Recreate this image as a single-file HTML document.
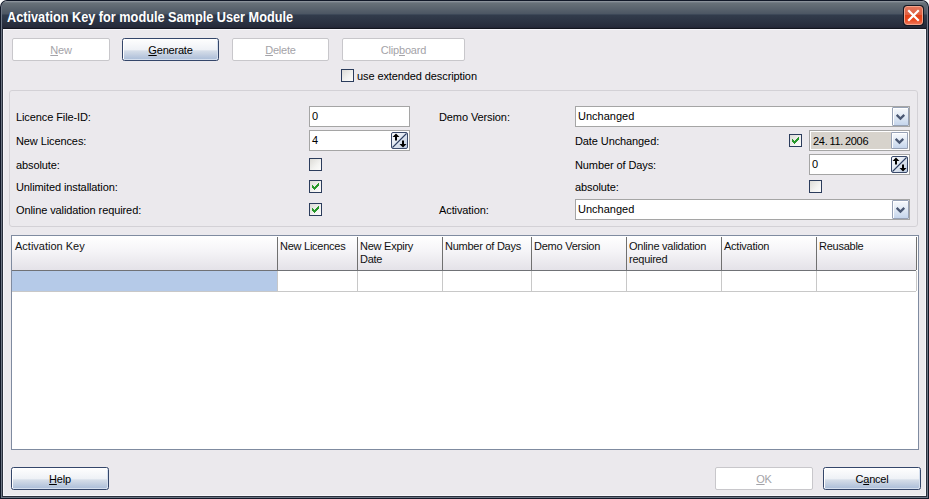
<!DOCTYPE html>
<html><head><meta charset="utf-8">
<style>
*{margin:0;padding:0;box-sizing:border-box}
html,body{width:929px;height:499px;overflow:hidden;background:#fff}
body{position:relative;font-family:"Liberation Sans",sans-serif;font-size:11px;color:#000;-webkit-font-smoothing:antialiased}
.a{position:absolute}
#win{left:0;top:0;width:929px;height:499px;background:#111828;border-radius:7px 7px 0 0;overflow:hidden}
#fb{left:1px;top:1px;width:927px;height:497px;background:#6d7584;border-radius:6px 6px 0 0}
#fc{left:2px;top:2px;width:925px;height:495px;background:#2a303c;border-radius:5px 5px 0 0}
#title{left:2px;top:1px;width:925px;height:27px;border-radius:5px 5px 0 0;
 background:linear-gradient(to bottom,#8b929a 0px,#8b929a 1px,#737c85 1px,#737c85 2px,#687179 2px,#4c5663 13px,#3d4858 13px,#3d4858 14px,#323c4c 14px,#262b3b 26px,#232636 26px,#232636 27px)}
#tline{left:3px;top:28px;width:923px;height:1px;background:#13161f}
#ttext{left:7px;top:11px;font-size:14px;letter-spacing:0;font-weight:bold;color:#fff;white-space:nowrap;line-height:13px;transform:scaleX(0.908);transform-origin:0 0}
#close{left:903px;top:5px;width:21px;height:21px;border-radius:4px;background:#151823;padding:1px}
#close i{display:block;width:19px;height:19px;border-radius:3px;border:1px solid #f3a48c;
 background:linear-gradient(to bottom,#e2755b 0%,#df6143 45%,#e3421a 50%,#e8481e 75%,#f07355 100%)}
#cw{left:3px;top:29px;width:923px;height:467px;background:#f7f6fb}
#content{left:4px;top:30px;width:921px;height:465px;background:#ebe9ed}
.btn{position:absolute;height:23px;border:1px solid #34466a;border-radius:2.5px;text-align:center;line-height:21px;padding-top:1px;letter-spacing:-0.2px;
 background:linear-gradient(to bottom,#fefefe 0%,#f8f9fb 20%,#eef1f6 52%,#d6dee9 56%,#c3cfe1 75%,#a9bcd8 100%);box-shadow:inset 1px 1px 0 #fff,inset -1px -1px 0 #d5dfee}
.btn.dis{border-color:#c8c7cb;border-radius:2px;background:#fff;color:#a4a3a8;box-shadow:none}
.u{text-decoration:underline;text-underline-offset:1px}
.lbl{position:absolute;white-space:nowrap;line-height:13px;margin-top:1px;letter-spacing:-0.1px}
.cb{position:absolute;width:13px;height:13px;border:1px solid #2b3c5c;background:linear-gradient(135deg,#dcdbd6 0%,#f3f3f1 60%,#fcfcfb 100%)}
.cb svg{position:absolute;left:-1px;top:-1px}
.fld{position:absolute;height:21px;border:1px solid #a5a5a5;background:#fff;padding-left:2px;line-height:19px}
.spin{position:absolute;width:17px;height:17px;border:1px solid #3a4a6b;border-radius:2px;background:linear-gradient(135deg,#fafbfd 0%,#dfe6f0 50%,#bccbe0 100%)}
.dd{position:absolute;width:17px;height:19px;border:1px solid #97a2b6;border-radius:1px;background:linear-gradient(to bottom,#f7f9fc 0%,#e3ebf5 45%,#c5d5ec 100%);box-shadow:inset 1px 1px 0 #fff}
#grp{left:9px;top:90px;width:909px;height:137px;border:1px solid #d3d1d6;border-radius:3px}
#tbl{left:11px;top:235px;width:908px;height:215px;border:1px solid #7f8ba0;background:#fff}
.hd{position:absolute;top:1px;height:34px;background:linear-gradient(to bottom,#ffffff 0%,#f4f3f6 50%,#e6e4ea 100%);border-bottom:1px solid #6f6f72}
.hs{position:absolute;top:2px;width:1px;height:33px;background:#707070}
.gl{position:absolute;top:35px;width:1px;height:21px;background:#c6c6c6}
.ht{position:absolute;top:6px;line-height:13px;white-space:nowrap;color:#111;letter-spacing:-0.25px}
</style></head><body>
<div id="win" class="a">
  <div id="fb" class="a"></div>
  <div id="fc" class="a"></div>
  <div id="title" class="a"></div>
  <div id="tline" class="a"></div>
  <div id="ttext" class="a">Activation Key for module Sample User Module</div>
  <div id="close" class="a"><i></i>
    <svg class="a" style="left:0;top:0" width="21" height="21" viewBox="0 0 21 21"><path d="M6 6L15 15M15 6L6 15" stroke="#fff" stroke-width="2.2" stroke-linecap="square"/></svg>
  </div>
  <div id="cw" class="a"></div>
  <div id="content" class="a"></div>

  <!-- top buttons -->
  <div class="btn dis" style="left:12px;top:38px;width:98px"><span class="u">N</span>ew</div>
  <div class="btn" style="left:122px;top:38px;width:97px"><span class="u">G</span>enerate</div>
  <div class="btn dis" style="left:232px;top:38px;width:97px"><span class="u">D</span>elete</div>
  <div class="btn dis" style="left:342px;top:38px;width:123px">Clip<span class="u">b</span>oard</div>
  <div class="cb" style="left:341px;top:69px"></div>
  <div class="lbl" style="left:357px;top:69px">use extended description</div>

  <div id="grp" class="a"></div>
  <div class="lbl" style="left:16px;top:110px">Licence File-ID:</div>
  <div class="lbl" style="left:16px;top:134px">New Licences:</div>
  <div class="lbl" style="left:16px;top:158px">absolute:</div>
  <div class="lbl" style="left:16px;top:180px">Unlimited installation:</div>
  <div class="lbl" style="left:16px;top:203px">Online validation required:</div>

  <div class="fld" style="left:309px;top:106px;width:101px">0</div>
  <div class="fld" style="left:309px;top:130px;width:101px">4</div>
  <div class="spin" style="left:391px;top:132px"><svg width="15" height="15" viewBox="0 0 15 15" style="position:absolute;left:0;top:0"><path d="M0.5 14.5L14.5 0.5" stroke="#2d3f63" stroke-width="1.1"/><path d="M4 0.5L7.5 4H5V7.5H3V4H0.5Z" fill="#000"/><path d="M10 7.5H12V11H14.5L11 14.5L7.5 11H10Z" fill="#000"/></svg></div>
  <div class="cb" style="left:309px;top:158px"></div>
  <div class="cb ck" style="left:309px;top:180px"><svg width="13" height="13" viewBox="0 0 13 13" shape-rendering="crispEdges"><path d="M9 3h1v1h-1zM8 4h2v1h-2zM3 5h1v1h-1zM7 5h3v1h-3zM3 6h2v1h-2zM6 6h3v1h-3zM3 7h5v1h-5zM4 8h3v1h-3zM5 9h1v1h-1z" fill="#27982a"/></svg></div>
  <div class="cb ck" style="left:309px;top:203px"><svg width="13" height="13" viewBox="0 0 13 13" shape-rendering="crispEdges"><path d="M9 3h1v1h-1zM8 4h2v1h-2zM3 5h1v1h-1zM7 5h3v1h-3zM3 6h2v1h-2zM6 6h3v1h-3zM3 7h5v1h-5zM4 8h3v1h-3zM5 9h1v1h-1z" fill="#27982a"/></svg></div>

  <div class="lbl" style="left:439px;top:110px">Demo Version:</div>
  <div class="fld" style="left:575px;top:106px;width:335px">Unchanged</div>
  <div class="dd" style="left:892px;top:107px"><svg width="15" height="17" viewBox="0 0 15 17" style="position:absolute;left:0;top:0"><path d="M3.65 6.85L7.45 10.65L11.25 6.85" stroke="#4a5873" stroke-width="2.2" fill="none"/></svg></div>
  <div class="lbl" style="left:575px;top:134px">Date Unchanged:</div>
  <div class="cb ck" style="left:789px;top:134px"><svg width="13" height="13" viewBox="0 0 13 13" shape-rendering="crispEdges"><path d="M9 3h1v1h-1zM8 4h2v1h-2zM3 5h1v1h-1zM7 5h3v1h-3zM3 6h2v1h-2zM6 6h3v1h-3zM3 7h5v1h-5zM4 8h3v1h-3zM5 9h1v1h-1z" fill="#27982a"/></svg></div>
  <div class="fld" style="left:809px;top:130px;width:101px;background:#d7d3cc;box-shadow:inset 0 0 0 1px #fff;padding-left:3px;padding-top:1px;letter-spacing:-0.3px"><span style="margin-right:2px">24.</span><span style="margin-right:2px">11.</span>2006</div>
  <div class="dd" style="left:891px;top:132px;height:17px"><svg width="15" height="15" viewBox="0 0 15 15" style="position:absolute;left:0;top:0"><path d="M3.65 5.85L7.45 9.65L11.25 5.85" stroke="#4a5873" stroke-width="2.2" fill="none"/></svg></div>
  <div class="lbl" style="left:575px;top:158px">Number of Days:</div>
  <div class="fld" style="left:809px;top:154px;width:101px">0</div>
  <div class="spin" style="left:891px;top:156px"><svg width="15" height="15" viewBox="0 0 15 15" style="position:absolute;left:0;top:0"><path d="M0.5 14.5L14.5 0.5" stroke="#2d3f63" stroke-width="1.1"/><path d="M4 0.5L7.5 4H5V7.5H3V4H0.5Z" fill="#000"/><path d="M10 7.5H12V11H14.5L11 14.5L7.5 11H10Z" fill="#000"/></svg></div>
  <div class="lbl" style="left:575px;top:180px">absolute:</div>
  <div class="cb" style="left:809px;top:180px"></div>
  <div class="lbl" style="left:439px;top:203px">Activation:</div>
  <div class="fld" style="left:575px;top:199px;width:335px">Unchanged</div>
  <div class="dd" style="left:892px;top:200px"><svg width="15" height="17" viewBox="0 0 15 17" style="position:absolute;left:0;top:0"><path d="M3.65 6.85L7.45 10.65L11.25 6.85" stroke="#4a5873" stroke-width="2.2" fill="none"/></svg></div>

  <div id="tbl" class="a"></div>
  <div class="a" style="left:12px;top:236px;width:904px;height:34px;background:linear-gradient(to bottom,#ffffff 0%,#f5f4f7 45%,#e4e2e8 100%)"></div>
  <div class="a" style="left:12px;top:270px;width:904px;height:1px;background:#707276"></div>
  <div class="a" style="left:12px;top:271px;width:265px;height:20px;background:#b5cae8"></div>
  <div class="a" style="left:12px;top:291px;width:904px;height:1px;background:#c8c8c8"></div>
  <div class="a" style="left:277px;top:237px;width:1px;height:33px;background:#707070"></div>
  <div class="a" style="left:277px;top:271px;width:1px;height:20px;background:#c8c8c8"></div>
  <div class="a" style="left:357px;top:237px;width:1px;height:33px;background:#707070"></div>
  <div class="a" style="left:357px;top:271px;width:1px;height:20px;background:#c8c8c8"></div>
  <div class="a" style="left:442px;top:237px;width:1px;height:33px;background:#707070"></div>
  <div class="a" style="left:442px;top:271px;width:1px;height:20px;background:#c8c8c8"></div>
  <div class="a" style="left:531px;top:237px;width:1px;height:33px;background:#707070"></div>
  <div class="a" style="left:531px;top:271px;width:1px;height:20px;background:#c8c8c8"></div>
  <div class="a" style="left:626px;top:237px;width:1px;height:33px;background:#707070"></div>
  <div class="a" style="left:626px;top:271px;width:1px;height:20px;background:#c8c8c8"></div>
  <div class="a" style="left:721px;top:237px;width:1px;height:33px;background:#707070"></div>
  <div class="a" style="left:721px;top:271px;width:1px;height:20px;background:#c8c8c8"></div>
  <div class="a" style="left:816px;top:237px;width:1px;height:33px;background:#707070"></div>
  <div class="a" style="left:816px;top:271px;width:1px;height:20px;background:#c8c8c8"></div>
  <div class="a" style="left:916px;top:237px;width:1px;height:33px;background:#707070"></div>
  <div class="a" style="left:916px;top:271px;width:1px;height:20px;background:#c8c8c8"></div>
  <div class="ht" style="left:15px;top:240px;letter-spacing:0">Activation Key</div>
  <div class="ht" style="left:280px;top:240px">New Licences</div>
  <div class="ht" style="left:360px;top:240px">New Expiry<br>Date</div>
  <div class="ht" style="left:445px;top:240px">Number of Days</div>
  <div class="ht" style="left:534px;top:240px">Demo Version</div>
  <div class="ht" style="left:629px;top:240px">Online validation<br>required</div>
  <div class="ht" style="left:724px;top:240px">Activation</div>
  <div class="ht" style="left:819px;top:240px">Reusable</div>

  <div class="btn" style="left:11px;top:467px;width:98px"><span class="u">H</span>elp</div>
  <div class="btn dis" style="left:715px;top:467px;width:98px"><span class="u">O</span>K</div>
  <div class="btn" style="left:823px;top:467px;width:98px">C<span class="u">a</span>ncel</div>
</div>
</body></html>
